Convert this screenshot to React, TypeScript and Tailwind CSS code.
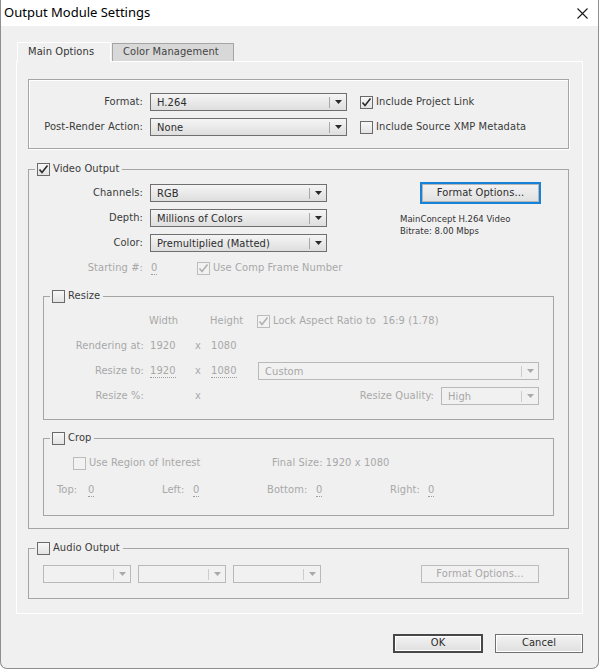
import React from "react";

const Arrow = ({ disabled }: { disabled?: boolean }) => (
  <svg width="7" height="4" viewBox="0 0 7 4">
    <path d="M0 0h7L3.5 4z" fill={disabled ? "#a9a9a9" : "#2a2a2a"} />
  </svg>
);

function Select({ cls, text, disabled }: { cls: string; text?: string; disabled?: boolean }) {
  return (
    <div
      className={`flex h-[18px] shrink-0 items-center border ${cls} ${
        disabled
          ? "border-[#b9b9b9] bg-[#f1f1f1] text-[#a6a6a6]"
          : "border-[#6f6f6f] bg-gradient-to-b from-[#f5f5f5] to-[#dedede] text-[#2b2b2b]"
      }`}
    >
      <span className="flex-1 truncate pl-[6px] leading-none">{text}</span>
      <span className={`h-[11px] w-px ${disabled ? "bg-[#cccccc]" : "bg-[#a8a8a8]"}`} />
      <span className="flex w-[16px] justify-center">
        <Arrow disabled={disabled} />
      </span>
    </div>
  );
}

function Check({ checked, disabled }: { checked?: boolean; disabled?: boolean }) {
  return (
    <span
      className={`flex h-[13px] w-[13px] shrink-0 items-center justify-center border ${
        disabled
          ? "border-[#bcbcbc] bg-[#f2f2f2]"
          : "border-[#6a6a6a] bg-gradient-to-b from-[#f7f7f7] to-[#e3e3e3]"
      }`}
    >
      {checked && (
        <svg width="11" height="11" viewBox="0 0 11 11">
          <path
            d="M1.5 5.5 L4 8.5 L9.5 1.5"
            fill="none"
            stroke={disabled ? "#b0b0b0" : "#2a2a2a"}
            strokeWidth="1.6"
          />
        </svg>
      )}
    </span>
  );
}

const Dotted = ({ children }: { children: React.ReactNode }) => (
  <span className="border-b border-dotted border-[#9c9c9c] leading-[12px]">{children}</span>
);

function Legend({ text, checked }: { text: string; checked?: boolean }) {
  return (
    <legend className="ml-[6px] px-[2px]">
      <span className="flex h-[13px] items-center text-[#3a3a3a]">
        <Check checked={checked} />
        <span className="ml-[3px] pr-[1px]">{text}</span>
      </span>
    </legend>
  );
}

export default function App() {
  const dis = "text-[#a8a8a8]";
  return (
    <div className="flex h-[669px] w-[599px] flex-col overflow-hidden rounded-b-[7px] border-x border-b border-[#8f8f8f] bg-[#f0f0f0] font-['DejaVu_Sans_Condensed','DejaVu_Sans',sans-serif] text-[11px] tracking-[0.1px] text-[#3a3a3a]">
      {/* title bar */}
      <div className="flex h-[26px] shrink-0 items-center bg-white pl-[3px]">
        <span className="font-['Noto_Sans',sans-serif] text-[13px] tracking-normal text-black">Output Module Settings</span>
        <svg className="ml-auto mr-[10px]" width="11" height="11" viewBox="0 0 11 11">
          <path d="M0.5 0.5 L10.5 10.5 M10.5 0.5 L0.5 10.5" stroke="#1a1a1a" strokeWidth="1.1" />
        </svg>
      </div>

      <div className="flex flex-col pl-[15px]">
        {/* tabs */}
        <div className="mt-[16px] flex h-[19px] items-start">
          <div className="relative z-10 ml-px flex h-[20px] w-[94px] items-center border-x border-t border-white bg-[#f0f0f0] pl-[10px] text-[#333]">
            Main Options
          </div>
          <div className="ml-px mt-px flex h-[18px] w-[122px] items-center border-x border-t border-[#a5a5a5] bg-[#d8d8d8] pl-[10px] text-[#444]">
            Color Management
          </div>
        </div>

        {/* panel */}
        <div className="flex h-[553px] w-[567px] flex-col border border-white pl-[11px] pt-[17px]">
          {/* format box */}
          <div className="flex w-[541px] flex-col gap-[7px] border border-[#a5a5a5] pb-[12px] pt-[13px] shadow-[inset_1px_1px_0_#ffffff,1px_1px_0_#ffffff]">
            <div className="flex items-center">
              <span className="w-[114px] text-right">Format:</span>
              <Select cls="ml-[7px] w-[197px]" text="H.264" />
              <span className="ml-[13px]"><Check checked /></span>
              <span className="ml-[3px]">Include Project Link</span>
            </div>
            <div className="flex items-center">
              <span className="w-[114px] text-right">Post-Render Action:</span>
              <Select cls="ml-[7px] w-[197px]" text="None" />
              <span className="ml-[13px]"><Check /></span>
              <span className="ml-[3px]">Include Source XMP Metadata</span>
            </div>
          </div>

          {/* video output */}
          <fieldset className="mt-[14px] w-[541px] border border-[#a5a5a5] pb-[12px]">
            <Legend text="Video Output" checked />
            <div className="flex">
              <div className="mt-[8px] flex w-[298px] shrink-0 flex-col gap-[7px]">
                <div className="flex h-[18px] items-center">
                  <span className="w-[114px] text-right">Channels:</span>
                  <Select cls="ml-[7px] w-[177px]" text="RGB" />
                </div>
                <div className="flex h-[18px] items-center">
                  <span className="w-[114px] text-right">Depth:</span>
                  <Select cls="ml-[7px] w-[177px]" text="Millions of Colors" />
                </div>
                <div className="flex h-[18px] items-center">
                  <span className="w-[114px] text-right">Color:</span>
                  <Select cls="ml-[7px] w-[177px]" text="Premultiplied (Matted)" />
                </div>
                <div className={`flex h-[18px] items-center whitespace-nowrap ${dis}`}>
                  <span className="w-[114px] shrink-0 text-right">Starting #:</span>
                  <span className="ml-[8px] w-[46px] shrink-0"><Dotted>0</Dotted></span>
                  <Check checked disabled />
                  <span className="ml-[3px] shrink-0">Use Comp Frame Number</span>
                </div>
              </div>
              <div className="ml-[73px] flex flex-col">
                <button className="ml-[20px] mt-[6px] flex h-[22px] w-[121px] items-center justify-center border-2 border-[#1683d8] bg-gradient-to-b from-[#f3f3f3] to-[#e0e0e0] text-[#2b2b2b] shadow-[inset_0_0_0_1px_#b5b5b5]">
                  Format Options...
                </button>
                <div className="mt-[9px] text-[9.5px] leading-[11.5px] tracking-normal text-[#333]">
                  <div>MainConcept H.264 Video</div>
                  <div>Bitrate: 8.00 Mbps</div>
                </div>
              </div>
            </div>

            {/* resize */}
            <fieldset className="mx-[14px] mt-[13px] border border-[#a5a5a5] pb-[14px]">
              <Legend text="Resize" />
              <div className={`mt-[9px] flex flex-col gap-[7px] ${dis}`}>
                <div className="flex h-[18px] items-center">
                  <span className="w-[100px]" />
                  <span className="ml-[5px] w-[41px]">Width</span>
                  <span className="w-[20px]" />
                  <span className="w-[47px]">Height</span>
                  <Check checked disabled />
                  <span className="ml-[3px]">Lock Aspect Ratio to&nbsp; 16:9 (1.78)</span>
                </div>
                <div className="flex h-[18px] items-center">
                  <span className="w-[100px] text-right">Rendering at:</span>
                  <span className="ml-[6px] w-[40px]">1920</span>
                  <span className="w-[21px] pl-[5px]">x</span>
                  <span className="w-[47px]">1080</span>
                </div>
                <div className="flex h-[18px] items-center">
                  <span className="w-[100px] text-right">Resize to:</span>
                  <span className="ml-[6px] w-[40px]"><Dotted>1920</Dotted></span>
                  <span className="w-[21px] pl-[5px]">x</span>
                  <span className="w-[47px]"><Dotted>1080</Dotted></span>
                  <Select cls="w-[281px]" text="Custom" disabled />
                </div>
                <div className="flex h-[18px] items-center">
                  <span className="w-[100px] text-right">Resize %:</span>
                  <span className="ml-[6px] w-[40px]" />
                  <span className="w-[21px] pl-[5px]">x</span>
                  <span className="w-[47px]" />
                  <div className="flex w-[281px] items-center justify-end">
                    <span>Resize Quality:</span>
                    <Select cls="ml-[7px] w-[98px]" text="High" disabled />
                  </div>
                </div>
              </div>
            </fieldset>

            {/* crop */}
            <fieldset className="mx-[14px] mt-[12px] border border-[#a5a5a5] pb-[16px]">
              <Legend text="Crop" />
              <div className={`mt-[9px] flex flex-col gap-[9px] ${dis}`}>
                <div className="flex h-[18px] items-center">
                  <div className="flex w-[228px] items-center pl-[29px]">
                    <Check disabled />
                    <span className="ml-[3px]">Use Region of Interest</span>
                  </div>
                  <span>Final Size: 1920 x 1080</span>
                </div>
                <div className="flex h-[18px] items-center pl-[13px]">
                  <div className="flex w-[105px] items-center">
                    <span className="w-[31px]">Top:</span>
                    <Dotted>0</Dotted>
                  </div>
                  <div className="flex w-[105px] items-center">
                    <span className="w-[31px]">Left:</span>
                    <Dotted>0</Dotted>
                  </div>
                  <div className="flex w-[123px] items-center">
                    <span className="w-[49px]">Bottom:</span>
                    <Dotted>0</Dotted>
                  </div>
                  <div className="flex items-center">
                    <span className="w-[38px]">Right:</span>
                    <Dotted>0</Dotted>
                  </div>
                </div>
              </div>
            </fieldset>
          </fieldset>

          {/* audio */}
          <fieldset className="mt-[13px] w-[541px] border border-[#a5a5a5] pb-[15px]">
            <Legend text="Audio Output" />
            <div className="mt-[10px] flex items-center gap-[7px] pl-[14px]">
              <Select cls="w-[88px]" disabled />
              <Select cls="w-[88px]" disabled />
              <Select cls="w-[88px]" disabled />
              <button className="ml-[93px] flex h-[18px] w-[118px] items-center justify-center border border-[#bcbcbc] bg-[#f1f1f1] text-[#a8a8a8]">
                Format Options...
              </button>
            </div>
          </fieldset>
        </div>

        {/* bottom buttons */}
        <div className="mt-[20px] flex items-center">
          <button className="ml-[377px] flex h-[19px] w-[90px] items-center justify-center border-2 border-[#474747] bg-gradient-to-b from-[#f3f3f3] to-[#dfdfdf] text-[#2b2b2b] shadow-[inset_0_0_0_1px_#ffffff]">
            OK
          </button>
          <button className="ml-[12px] flex h-[19px] w-[88px] items-center justify-center border border-[#707070] bg-gradient-to-b from-[#f3f3f3] to-[#dfdfdf] text-[#2b2b2b] shadow-[inset_0_0_0_1px_#ffffff]">
            Cancel
          </button>
        </div>
      </div>
    </div>
  );
}
